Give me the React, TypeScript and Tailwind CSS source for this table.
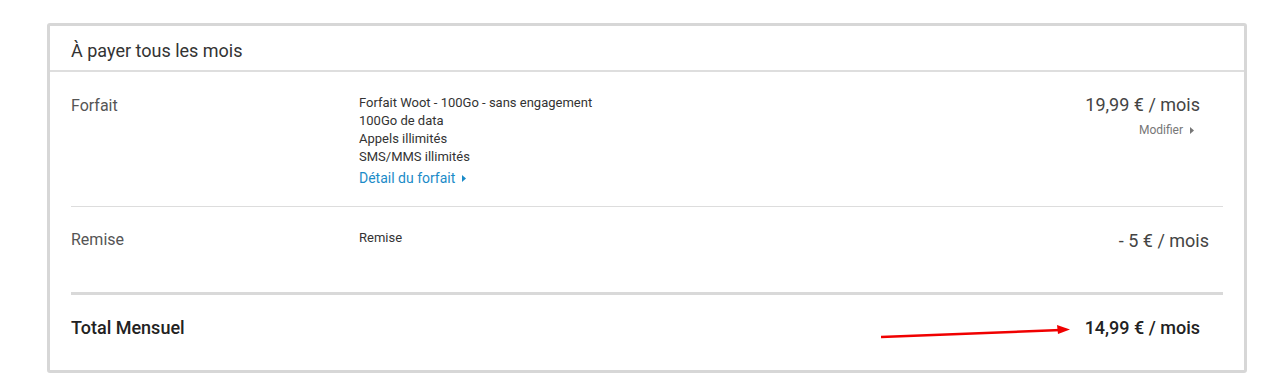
const Caret = () => (
  <svg width="4" height="7" viewBox="0 0 4 7" className="inline-block ml-[7px] mb-[1px]">
    <path d="M0 0 L4 3.5 L0 7 Z" fill="currentColor" />
  </svg>
);

const App = () => {
  return (
    <div className="min-h-[391px] w-full bg-white pl-[47px] pt-[23px] font-['Roboto',sans-serif]">
      <div className="w-[1200px] rounded-[3px] border-[3px] border-[#d7d7d7] bg-white">
        <div className="flex h-[46px] items-center border-b-2 border-[#dedede] px-[21px] pt-[4px] text-[18px] text-[#333]">
          À payer tous les mois
        </div>
        <div className="px-[21px]">
          {/* Forfait */}
          <div className="flex border-b border-[#dddddd] pb-[19px] pt-[21px]">
            <div className="w-[288px] pt-[1px] text-[16px] leading-[24px] text-[#555]">Forfait</div>
            <div className="flex-1 pt-[1px] text-[13px] leading-[18px] text-[#333]">
              <p>Forfait Woot - 100Go - sans engagement</p>
              <p>100Go de data</p>
              <p>Appels illimités</p>
              <p>SMS/MMS illimités</p>
              <p className="mt-[3px] text-[14px] leading-[18px] text-[#1b8bc8]">
                Détail du forfait
                <Caret />
              </p>
            </div>
            <div className="flex flex-col items-end pr-[23px]">
              <span className="text-[18px] leading-[24px] text-[#444]">19,99 € / mois</span>
              <span className="mr-[6px] mt-[4px] text-[12px] leading-[18px] text-[#777]">
                Modifier
                <Caret />
              </span>
            </div>
          </div>
          {/* Remise */}
          <div className="flex border-b-[3px] border-[#d9d9d9] pb-[39px] pt-[21px]">
            <div className="w-[288px] text-[16px] leading-[24px] text-[#555]">Remise</div>
            <div className="flex-1 pt-[1px] text-[13px] leading-[18px] text-[#333]">Remise</div>
            <div className="pr-[14px] pt-[1px] text-[18px] leading-[24px] text-[#444]">- 5 € / mois</div>
          </div>
          {/* Total */}
          <div className="relative flex items-center pb-[30px] pt-[21px]">
            <div className="flex-1 text-[18px] font-medium leading-[24px] text-[#222]">Total Mensuel</div>
            <div className="pr-[23px] text-[18px] font-medium leading-[24px] text-[#222]">14,99 € / mois</div>
            <svg
              className="pointer-events-none absolute left-[810px] top-[26px]"
              width="200"
              height="20"
              viewBox="0 0 200 20"
            >
              <line x1="0" y1="16" x2="180" y2="9" stroke="#f00000" strokeWidth="2.5" />
              <path d="M176 4 L189 8.5 L177 13 Z" fill="#f00000" />
            </svg>
          </div>
        </div>
      </div>
    </div>
  );
};

export default App;
